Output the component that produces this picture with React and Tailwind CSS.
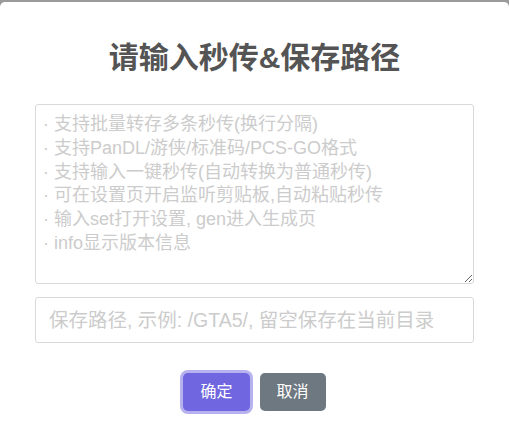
import React from "react";

const font = { fontFamily: '"Liberation Sans", "Noto Sans CJK SC", sans-serif' };

const tips = [
  "· 支持批量转存多条秒传(换行分隔)",
  "· 支持PanDL/游侠/标准码/PCS-GO格式",
  "· 支持输入一键秒传(自动转换为普通秒传)",
  "· 可在设置页开启监听剪贴板,自动粘贴秒传",
  "· 输入set打开设置, gen进入生成页",
  "· info显示版本信息",
].join("\n");

const App = () => {
  return (
    <div className="w-[509px] h-[437px] bg-[#9a9a9a] pt-[2px] overflow-hidden" style={font}>
      <div className="h-[435px] bg-white rounded-t-[5px] flex flex-col items-center pt-[38px]">
        {/* Title */}
        <h2 className="text-[30px] leading-[36px] font-bold text-[#545454]">
          请输入秒传&保存路径
        </h2>

        {/* Textarea */}
        <textarea
          className="mt-[28px] w-[439px] h-[180px] border border-[#d9d9d9] rounded-[3px] pl-[7px] pr-[8px] pt-[8px] text-[18px] leading-[23.8px] text-[#545454] placeholder:text-[#cccccc] outline-none resize-y"
          placeholder={tips}
        />

        {/* Path input */}
        <input
          className="mt-[13px] w-[439px] h-[46px] border border-[#d9d9d9] rounded-[3px] px-[13px] text-[19.5px] text-[#545454] placeholder:text-[#cccccc] outline-none"
          placeholder="保存路径, 示例: /GTA5/, 留空保存在当前目录"
        />

        {/* Buttons */}
        <div className="mt-[30px] flex items-center gap-[10px]">
          <button className="h-[38px] px-[17px] rounded-[5px] bg-[#7066e0] text-white text-[16px] ring-[3px] ring-[#7066e0]/50">
            确定
          </button>
          <button className="h-[38px] px-[17px] rounded-[5px] bg-[#6e7881] text-white text-[16px]">
            取消
          </button>
        </div>
      </div>
    </div>
  );
};

export default App;
